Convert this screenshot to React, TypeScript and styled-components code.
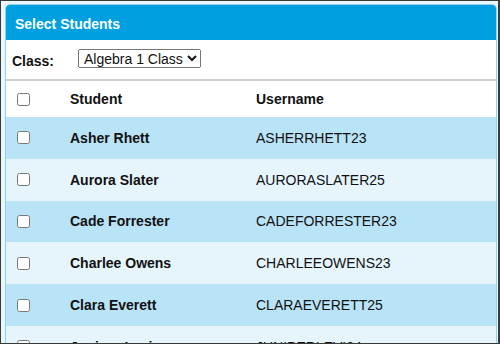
import React from 'react';
import styled, { createGlobalStyle } from 'styled-components';

interface Student {
  name: string;
  username: string;
}

const students: Student[] = [
  { name: 'Asher Rhett', username: 'ASHERRHETT23' },
  { name: 'Aurora Slater', username: 'AURORASLATER25' },
  { name: 'Cade Forrester', username: 'CADEFORRESTER23' },
  { name: 'Charlee Owens', username: 'CHARLEEOWENS23' },
  { name: 'Clara Everett', username: 'CLARAEVERETT25' },
  { name: 'Juniper Levi', username: 'JUNIPERLEVI24' },
];

const GlobalStyle = createGlobalStyle`
  html, body {
    margin: 0;
    padding: 0;
    background: #ffffff;
  }
  body {
    font-family: "Liberation Sans", Arial, sans-serif;
    color: #111;
  }
`;

const Frame = styled.div`
  box-sizing: border-box;
  width: 500px;
  height: 344px;
  overflow: hidden;
  background: #e9f6fc;
  border: 1px solid #3a3a3a;
  border-right-width: 2px;
  padding: 3px 1px 0 4px;
`;

const Panel = styled.div`
  border: 1px solid #8dd2f1;
  border-radius: 5px 5px 0 0;
  background: #ffffff;
  overflow: hidden;
`;

const Header = styled.div`
  box-sizing: border-box;
  height: 35px;
  display: flex;
  align-items: center;
  padding: 2px 0 0 9px;
  background: #009fe0;
  color: #ffffff;
  font-size: 14px;
  font-weight: bold;
`;

const ClassRow = styled.div`
  height: 39px;
  display: flex;
  align-items: center;
  padding-left: 6px;
  border-bottom: 2px solid #cfcfcf;
`;

const ClassLabel = styled.label`
  font-size: 14px;
  font-weight: bold;
  width: 66px;
  padding-top: 3px;
`;

const ClassSelect = styled.select`
  font-family: "Liberation Sans", Arial, sans-serif;
  font-size: 14px;
  height: 19px;
  padding: 0 1px;
  margin-top: -2px;
  color: #111;
`;

const Row = styled.div<{ $bg: string; $h: number }>`
  display: grid;
  grid-template-columns: 54px 186px 1fr;
  align-items: center;
  height: ${(p) => p.$h}px;
  background: ${(p) => p.$bg};
  font-size: 14px;
`;

const CheckCell = styled.div`
  padding-left: 11px;
  display: flex;
  align-items: center;
`;

const Check = styled.input`
  margin: 0;
  width: 13px;
  height: 13px;
`;

const Cell = styled.div<{ $bold?: boolean }>`
  padding-left: 10px;
  font-weight: ${(p) => (p.$bold ? 'bold' : 'normal')};
  white-space: nowrap;
`;

export default function App() {
  return (
    <>
      <GlobalStyle />
      <Frame>
        <Panel>
          <Header>Select Students</Header>
          <ClassRow>
            <ClassLabel htmlFor="cls">Class:</ClassLabel>
            <ClassSelect id="cls" defaultValue="alg1">
              <option value="alg1">Algebra 1 Class</option>
            </ClassSelect>
          </ClassRow>
          <Row $bg="#ffffff" $h={36}>
            <CheckCell>
              <Check type="checkbox" />
            </CheckCell>
            <Cell $bold>Student</Cell>
            <Cell $bold>Username</Cell>
          </Row>
          {students.map((s, i) => (
            <Row key={s.username} $bg={i % 2 === 0 ? '#b9e3f6' : '#e6f5fc'} $h={41.8}>
              <CheckCell>
                <Check type="checkbox" />
              </CheckCell>
              <Cell $bold>{s.name}</Cell>
              <Cell>{s.username}</Cell>
            </Row>
          ))}
        </Panel>
      </Frame>
    </>
  );
}
